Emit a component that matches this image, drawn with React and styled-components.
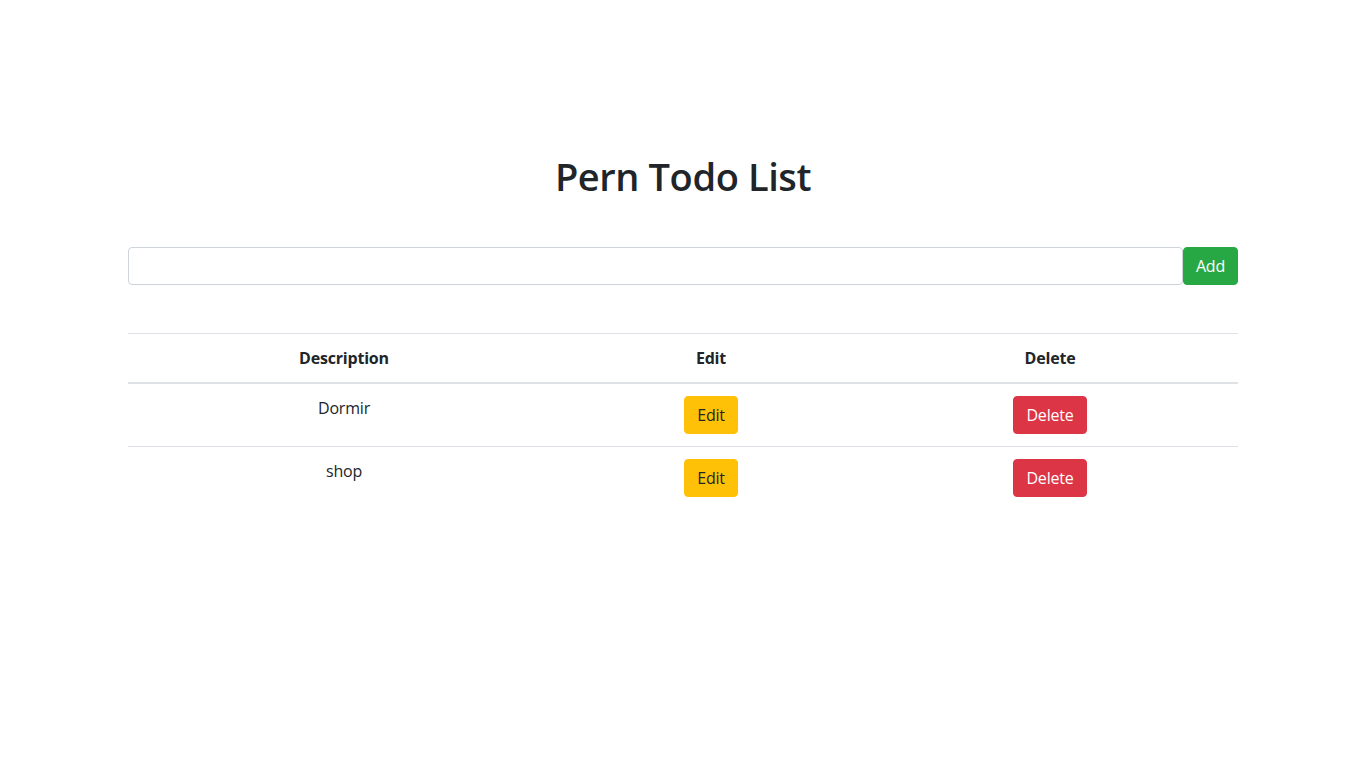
import React from 'react';
import styled, { createGlobalStyle } from 'styled-components';

const GlobalStyle = createGlobalStyle`
  body {
    margin: 0;
    font-family: "Segoe UI", "Open Sans", "Noto Sans", sans-serif;
    font-size: 16px;
    line-height: 1.5;
    letter-spacing: -0.2px;
    color: #212529;
    background: #fff;
  }
  * { box-sizing: border-box; }
`;

const Container = styled.div`
  width: 1140px;
  margin: 0 auto;
  padding: 154px 15px 0;
`;

const Title = styled.h1`
  margin: 0;
  text-align: center;
  font-size: 38px;
  font-weight: 600;
  letter-spacing: -0.4px;
  line-height: 1.2;
  height: 48px;
`;

const Form = styled.form`
  display: flex;
  margin-top: 45px;
`;

const Input = styled.input`
  flex: 1;
  height: 38px;
  padding: 6px 12px;
  font: inherit;
  color: #495057;
  border: 1px solid #ced4da;
  border-radius: 4px;
  outline: none;
`;

const Button = styled.button`
  height: 38px;
  padding: 6px 12px;
  font-family: inherit;
  font-size: 16px;
  line-height: 1.5;
  letter-spacing: inherit;
  border: 1px solid ${p => p.$bg};
  border-radius: 4px;
  background: ${p => p.$bg};
  color: ${p => p.$fg};
  cursor: pointer;
`;

const Table = styled.table`
  width: 100%;
  margin-top: 48px;
  border-collapse: collapse;
  table-layout: fixed;
`;

const Th = styled.th`
  padding: 12px;
  text-align: center;
  font-weight: 700;
  vertical-align: bottom;
  border-top: 1px solid #dee2e6;
  border-bottom: 2px solid #dee2e6;
`;

const Td = styled.td`
  padding: 12px;
  text-align: center;
  vertical-align: top;
  border-top: 1px solid #dee2e6;
`;

const todos = [
  { id: 1, description: 'Dormir' },
  { id: 2, description: 'shop' },
];

export default function App() {
  return (
    <>
      <GlobalStyle />
      <Container>
        <Title>Pern Todo List</Title>
        <Form onSubmit={e => e.preventDefault()}>
          <Input type="text" />
          <Button $bg="#28a745" $fg="#fff">Add</Button>
        </Form>
        <Table>
          <colgroup>
            <col style={{ width: 432 }} />
            <col style={{ width: 302 }} />
            <col style={{ width: 376 }} />
          </colgroup>
          <thead>
            <tr>
              <Th>Description</Th>
              <Th>Edit</Th>
              <Th>Delete</Th>
            </tr>
          </thead>
          <tbody>
            {todos.map(todo => (
              <tr key={todo.id}>
                <Td>{todo.description}</Td>
                <Td>
                  <Button $bg="#ffc107" $fg="#212529">Edit</Button>
                </Td>
                <Td>
                  <Button $bg="#dc3545" $fg="#fff">Delete</Button>
                </Td>
              </tr>
            ))}
          </tbody>
        </Table>
      </Container>
    </>
  );
}
